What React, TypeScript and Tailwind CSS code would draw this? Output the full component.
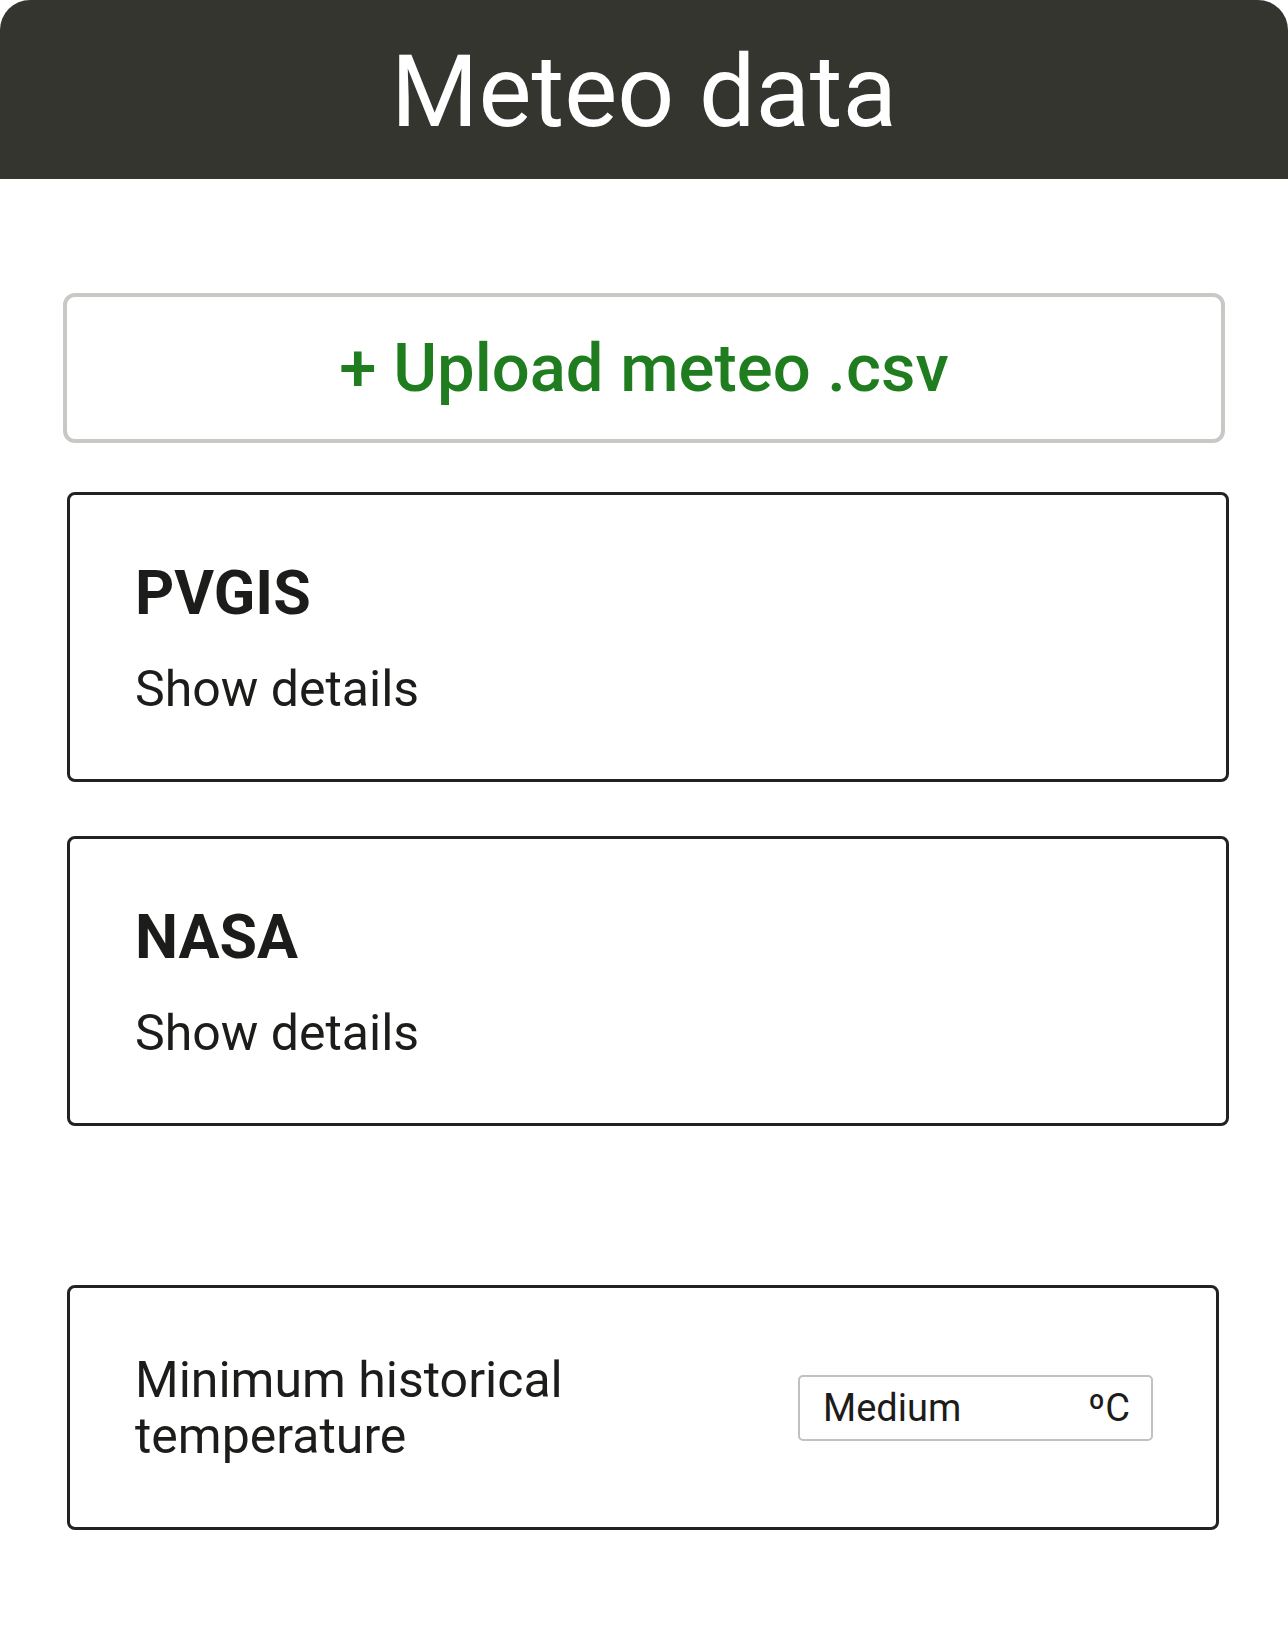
export default function App() {
  return (
    <div className="min-h-[1652px] w-[1288px] bg-white font-['Roboto',sans-serif] text-[#1c1c1a]">
      <header className="flex h-[179px] items-center justify-center rounded-t-[30px] bg-[#353530] pt-1">
        <h1 className="text-[100px] font-normal leading-none text-white">Meteo data</h1>
      </header>

      <main className="flex flex-col pt-[114px]">
        <button className="mx-[63px] flex h-[150px] items-center justify-center rounded-[12px] border-4 border-[#c7c9c4] bg-white">
          <span className="text-[67px] font-medium leading-none text-[#1f7d1f]">+ Upload meteo .csv</span>
        </button>

        <div className="ml-[67px] mr-[59px] mt-[49px] flex flex-col gap-[54px]">
          {["PVGIS", "NASA"].map((name) => (
            <div
              key={name}
              className="rounded-[8px] border-[3px] border-[#222220] pb-[65px] pl-[65px] pt-[68px]"
            >
              <div className="text-[61px] font-bold leading-none">{name}</div>
              <div className="mt-[40px] text-[50px] leading-none">Show details</div>
            </div>
          ))}
        </div>

        <div className="ml-[67px] mr-[69px] mt-[159px] flex items-center justify-between rounded-[8px] border-[3px] border-[#222220] pb-[63px] pl-[65px] pr-[63px] pt-[64px]">
          <div className="w-[460px] text-[50px] leading-[56px]">Minimum historical temperature</div>
          <div className="flex h-[66px] w-[355px] items-center justify-between rounded-[5px] border-2 border-[#c0c3bd] pl-[23px] pr-[21px] text-[38px] leading-none">
            <span>Medium</span>
            <span>ºC</span>
          </div>
        </div>
      </main>
    </div>
  );
}
